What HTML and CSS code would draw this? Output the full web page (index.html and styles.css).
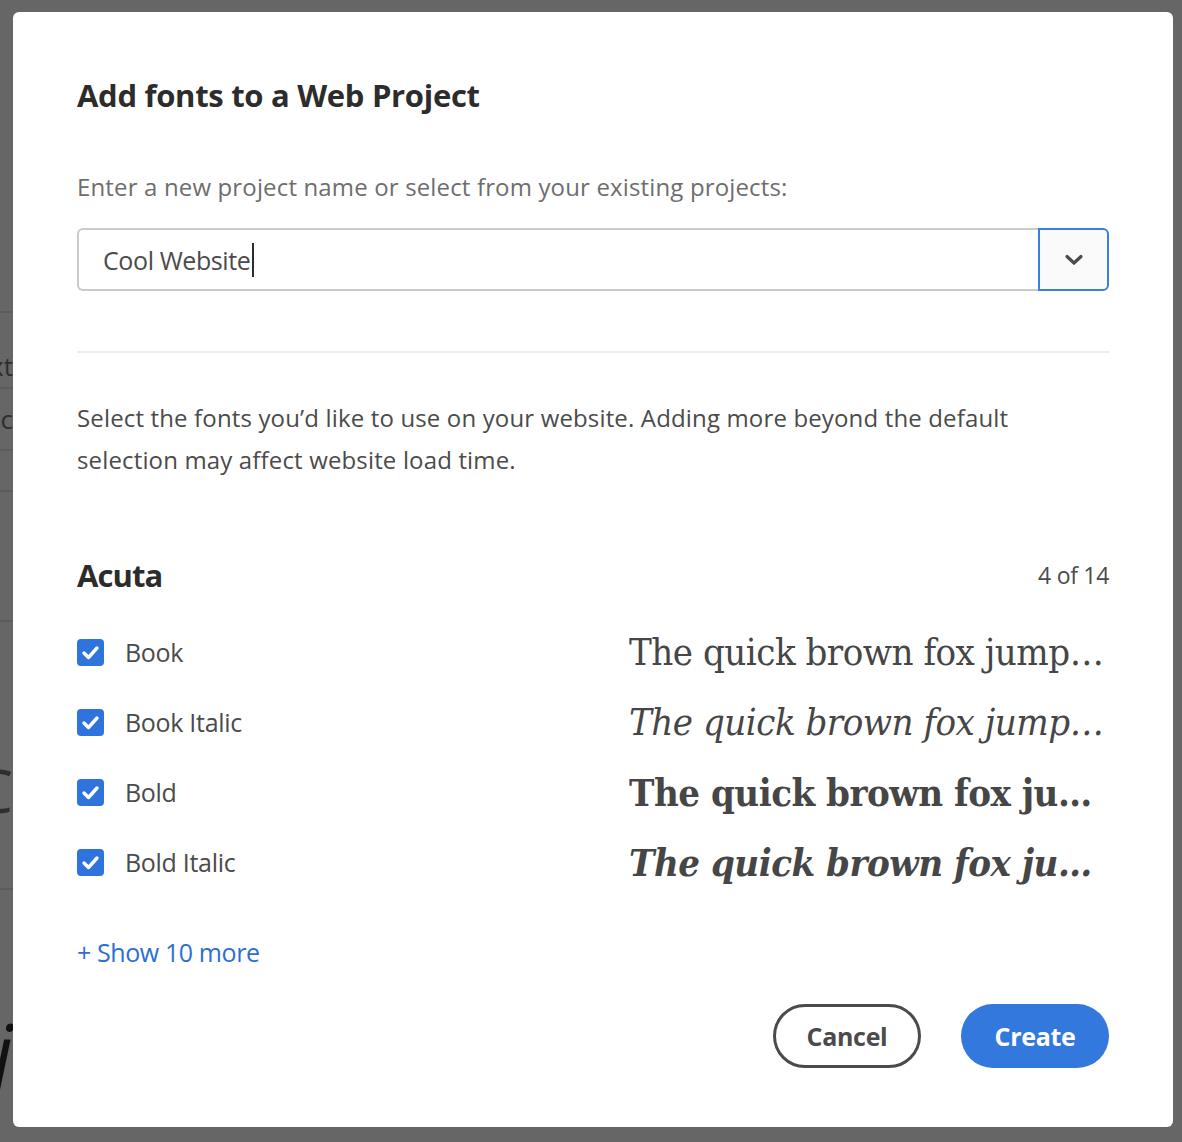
FILE: index.html
```html
<!DOCTYPE html>
<html lang="en">
<head>
<meta charset="utf-8">
<title>Add fonts to a Web Project</title>
<link rel="stylesheet" href="styles.css">
</head>
<body>
<div class="bg-page" aria-hidden="true">
  <div class="bg-row r1"></div>
  <div class="bg-row r2">xt</div>
  <div class="bg-row r3">ic</div>
  <div class="bg-row r4"></div>
  <div class="bg-row r5"></div>
  <div class="bg-row r6">C</div>
  <div class="bg-row r7">j</div>
</div>

<div class="overlay">
  <div class="dialog" role="dialog" aria-labelledby="dlg-title">
    <h1 id="dlg-title" class="title">Add fonts to a Web Project</h1>

    <p class="label">Enter a new project name or select from your existing projects:</p>
    <div class="combo">
      <div class="combo-input">Cool Website<span class="caret"></span></div>
      <button class="combo-btn" aria-label="Show projects">
        <svg width="20" height="12" viewBox="0 0 20 12"><path d="M3 2.5 L10 9 L17 2.5" fill="none" stroke="#4b4b4b" stroke-width="3.2" stroke-linecap="round" stroke-linejoin="round"/></svg>
      </button>
    </div>

    <hr class="divider">

    <p class="desc">Select the fonts you’d like to use on your website. Adding more beyond the default selection may affect website load time.</p>

    <div class="family-head">
      <h2 class="family">Acuta</h2>
      <span class="count">4 of 14</span>
    </div>

    <ul class="styles">
      <li class="style-row">
        <span class="check"><svg width="27" height="27" viewBox="0 0 27 27"><path d="M7 14 L11.5 18.5 L20 9" fill="none" stroke="#fff" stroke-width="3.4" stroke-linecap="round" stroke-linejoin="round"/></svg></span>
        <span class="style-name">Book</span>
        <span class="sample s-book">The quick brown fox jumps over the lazy dog</span>
      </li>
      <li class="style-row">
        <span class="check"><svg width="27" height="27" viewBox="0 0 27 27"><path d="M7 14 L11.5 18.5 L20 9" fill="none" stroke="#fff" stroke-width="3.4" stroke-linecap="round" stroke-linejoin="round"/></svg></span>
        <span class="style-name">Book Italic</span>
        <span class="sample s-italic">The quick brown fox jumps over the lazy dog</span>
      </li>
      <li class="style-row">
        <span class="check"><svg width="27" height="27" viewBox="0 0 27 27"><path d="M7 14 L11.5 18.5 L20 9" fill="none" stroke="#fff" stroke-width="3.4" stroke-linecap="round" stroke-linejoin="round"/></svg></span>
        <span class="style-name">Bold</span>
        <span class="sample s-bold">The quick brown fox jumps over the lazy dog</span>
      </li>
      <li class="style-row">
        <span class="check"><svg width="27" height="27" viewBox="0 0 27 27"><path d="M7 14 L11.5 18.5 L20 9" fill="none" stroke="#fff" stroke-width="3.4" stroke-linecap="round" stroke-linejoin="round"/></svg></span>
        <span class="style-name">Bold Italic</span>
        <span class="sample s-bolditalic">The quick brown fox jumps over the lazy dog</span>
      </li>
    </ul>

    <a class="more" href="#">+ Show 10 more</a>

    <div class="actions">
      <button class="btn btn-cancel">Cancel</button>
      <button class="btn btn-create">Create</button>
    </div>
  </div>
</div>
</body>
</html>
```

FILE: styles.css
```css
* { box-sizing: border-box; }

html, body {
  margin: 0;
  padding: 0;
}

body {
  width: 1182px;
  height: 1142px;
  background: #666666;
  font-family: "Open Sans", "Liberation Sans", sans-serif;
  overflow: hidden;
}

/* dimmed page behind the modal */
.bg-page {
  width: 13px;
  overflow: hidden;
  color: #2e2e2e;
  font-family: "Open Sans", sans-serif;
  font-size: 26px;
  white-space: nowrap;
}
.bg-row {
  border-bottom: 2px solid #5c5c5c;
  display: flex;
  justify-content: flex-end;
  align-items: center;
  overflow: hidden;
  line-height: 1;
}
.r1 { height: 313px; }
.r2 { height: 76px; align-items: flex-start; padding-top: 40px; }
.r3 { height: 62px; }
.r4 { height: 41px; }
.r5 { height: 130px; }
.r6 { height: 268px; font-size: 60px; align-items: flex-start; padding-top: 138px; }
.r7 { height: 252px; border-bottom: none; font-size: 80px; color: #111; font-style: italic; align-items: flex-start; padding-top: 122px; }

.overlay {
  position: fixed;
  inset: 0;
  padding: 12px 9px 15px 13px;
}

.dialog {
  background: #ffffff;
  border-radius: 6px;
  height: 100%;
  padding: 61px 64px 0 64px;
  color: #4b4b4b;
  display: flex;
  flex-direction: column;
}

.title {
  margin: 0;
  font-size: 31px;
  font-weight: 700;
  color: #2c2c2c;
  line-height: 44px;
  letter-spacing: -0.3px;
}

.label {
  margin: 54px 0 0 0;
  font-size: 24px;
  line-height: 32px;
  color: #6e6e6e;
  letter-spacing: 0.15px;
}

.combo {
  margin-top: 25px;
  display: flex;
  height: 63px;
}
.combo-input {
  flex: 1;
  border: 2px solid #cacaca;
  border-right: none;
  border-radius: 6px 0 0 6px;
  padding-left: 24px;
  display: flex;
  align-items: center;
  font-size: 25px;
  color: #4b4b4b;
  letter-spacing: -0.4px;
}
.caret {
  display: inline-block;
  width: 2px;
  height: 34px;
  background: #2c2c2c;
  margin-left: 2px;
}
.combo-btn {
  width: 71px;
  border: 2px solid #3a7fe0;
  border-radius: 0 6px 6px 0;
  background: #fafafa;
  display: flex;
  align-items: center;
  justify-content: center;
  padding: 0;
}

.divider {
  margin: 60px 0 0 0;
  border: none;
  border-top: 2px solid #ececec;
}

.desc {
  margin: 44px 0 0 0;
  font-size: 24px;
  line-height: 42px;
  color: #4b4b4b;
  letter-spacing: 0.15px;
  max-width: 960px;
}

.family-head {
  margin-top: 74px;
  display: flex;
  justify-content: space-between;
  align-items: center;
}
.family {
  margin: 0;
  font-size: 31px;
  font-weight: 700;
  color: #2c2c2c;
  line-height: 40px;
  letter-spacing: -0.9px;
}
.count {
  font-size: 23px;
  color: #4b4b4b;
  letter-spacing: -0.3px;
}

.styles {
  list-style: none;
  margin: 22px 0 0 0;
  padding: 0;
}
.style-row {
  display: flex;
  align-items: center;
  height: 70px;
}
.check {
  width: 27px;
  height: 27px;
  border-radius: 4px;
  background: #2f73dc;
  display: flex;
  flex: none;
}
.style-name {
  margin-left: 21px;
  font-size: 25px;
  color: #4b4b4b;
  letter-spacing: -0.3px;
  width: 420px;
  flex: none;
}
.sample {
  margin-left: auto;
  width: 480px;
  overflow: hidden;
  white-space: nowrap;
  text-overflow: ellipsis;
  text-align: right;
  font-family: "DejaVu Serif Condensed", "DejaVu Serif", "Liberation Serif", serif;
  font-stretch: condensed;
  font-size: 38px;
  color: #464646;
  letter-spacing: -0.5px;
}
.s-italic { font-style: italic; }
.s-bold { font-weight: 700; }
.s-bolditalic { font-weight: 700; font-style: italic; }

.more {
  margin-top: 38px;
  align-self: flex-start;
  font-size: 25px;
  color: #2d6ed3;
  text-decoration: none;
  letter-spacing: -0.4px;
}

.actions {
  margin-top: 35px;
  display: flex;
  justify-content: flex-end;
  gap: 40px;
}
.btn {
  width: 148px;
  height: 64px;
  border-radius: 32px;
  font-family: "Open Sans", sans-serif;
  font-size: 25px;
  font-weight: 700;
  letter-spacing: -0.3px;
  padding: 0;
}
.btn-cancel {
  background: #ffffff;
  border: 3px solid #4b4b4b;
  color: #4b4b4b;
}
.btn-create {
  background: #3278dd;
  border: none;
  color: #ffffff;
}
```
